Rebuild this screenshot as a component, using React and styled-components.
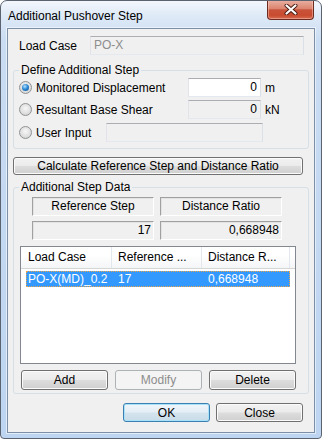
import React from 'react'
import styled, { createGlobalStyle } from 'styled-components'

const GlobalStyle = createGlobalStyle`
  html, body { margin: 0; padding: 0; background: #ffffff; }
  body {
    font-family: "Liberation Sans", Arial, sans-serif;
    font-size: 12px;
    color: #000;
  }
  * { box-sizing: border-box; }
`

const Window = styled.div`
  width: 322px;
  height: 439px;
  border: 1px solid #5b6370;
  border-radius: 7px 7px 4px 4px;
  background: linear-gradient(180deg, #f3f7fc 0px, #dfeaf7 14px, #c9dcf2 40px, #bdd5f1 100%);
  padding: 0 6px 5px;
  display: flex;
  flex-direction: column;
  overflow: hidden;
`

const TitleBar = styled.div`
  height: 27px;
  display: flex;
  align-items: center;
  padding-left: 1px;
`

const TitleText = styled.div`
  font-size: 12px;
  padding-top: 2px;
  color: #000;
`

const CloseButton = styled.div`
  margin-left: auto;
  margin-right: 1px;
  align-self: flex-start;
  margin-top: -1px;
  width: 47px;
  height: 20px;
  border: 1px solid #6d2b1f;
  border-top: none;
  border-radius: 0 0 4px 4px;
  background: linear-gradient(180deg, #eab2a5 0%, #dc8570 45%, #c8533a 52%, #c94b2f 80%, #d66a50 100%);
  box-shadow: inset 0 0 0 1px rgba(255, 210, 200, 0.45);
  display: flex;
  align-items: center;
  justify-content: center;
`

const Client = styled.div`
  flex: 1;
  background: #f0f0f0;
  border: 1px solid #7b8fa6;
  box-shadow: 0 0 0 1px rgba(255, 255, 255, 0.55);
  display: flex;
  flex-direction: column;
`

const LoadCaseRow = styled.div`
  margin-top: 7px;
  height: 19px;
  display: flex;
  align-items: center;
  padding-left: 11px;
`

const Label = styled.div`
  width: ${p => p.$w || 71}px;
  white-space: nowrap;
`

const Field = styled.div`
  width: ${p => p.$w}px;
  height: 19px;
  border: 1px solid;
  border-color: #abadb3 #dbdfe6 #e3e9ef #e2e3ea;
  background: ${p => (p.$disabled ? '#f0f0f0' : '#ffffff')};
  color: ${p => (p.$disabled && p.$grey ? '#8d8d8d' : '#000')};
  text-align: ${p => p.$align || 'left'};
  padding: 0 3px;
  line-height: 17px;
  white-space: nowrap;
  overflow: hidden;
`

const Group = styled.div`
  margin: ${p => p.$top}px 5px 0;
  border: 1px solid #d5dfe5;
  border-radius: 3px;
  display: flex;
  flex-direction: column;
  padding-bottom: ${p => p.$bottom}px;
`

const GroupTitle = styled.div`
  align-self: flex-start;
  margin: -8px 0 0 5px;
  padding: 0 2px;
  line-height: 14px;
  background: #f0f0f0;
`

const RadioRow = styled.div`
  margin-top: ${p => p.$top}px;
  height: 19px;
  display: flex;
  align-items: center;
  padding-left: 5px;
`

const RadioOption = styled.label`
  width: ${p => p.$w}px;
  display: flex;
  align-items: center;
  gap: 4px;
  white-space: nowrap;
`

const RadioCircle = styled.span`
  width: 13px;
  height: 13px;
  border-radius: 50%;
  border: 1px solid #8f9294;
  background: radial-gradient(circle at 50% 40%, #f7f7f7 0%, #dedede 60%, #c9c9c9 100%);
  display: flex;
  align-items: center;
  justify-content: center;
  flex-shrink: 0;

  &::after {
    content: '';
    display: ${p => (p.$checked ? 'block' : 'none')};
    width: 7px;
    height: 7px;
    border-radius: 50%;
    background: radial-gradient(circle at 40% 35%, #b6e4ff 0%, #2f8ad6 45%, #0d4a8f 100%);
  }
`

const Unit = styled.span`
  margin-left: 4px;
`

const Button = styled.button`
  width: ${p => p.$w || 87}px;
  height: ${p => p.$h || 20}px;
  padding: 0;
  font-family: inherit;
  font-size: 12px;
  color: #000;
  border: 1px solid #707070;
  border-radius: 3px;
  background: linear-gradient(180deg, #f2f2f2 0%, #ebebeb 48%, #dddddd 52%, #cfcfcf 100%);
  box-shadow: inset 0 0 0 1px #fbfbfb;

  &:disabled {
    color: #8d8d8d;
    border-color: #adb2b5;
    background: #f4f4f4;
    box-shadow: none;
  }
`

const DefaultButton = styled(Button)`
  border-color: #3c7fb1;
  background: linear-gradient(180deg, #f0f6fa 0%, #e4eef5 48%, #d4e4ee 52%, #c8dce8 100%);
  box-shadow: inset 0 0 0 1px #a8e2f8;
`

const CalcButton = styled(Button)`
  margin: 8px 0 0 5px;
  align-self: flex-start;
`

const StepGrid = styled.div`
  margin-top: 3px;
  padding-left: 18px;
  display: grid;
  grid-template-columns: 122px 122px;
  column-gap: 6px;
  row-gap: 5px;
`

const Static = styled.div`
  height: 19px;
  border: 1px solid;
  border-color: #a0a0a0 #ffffff #ffffff #a0a0a0;
  box-shadow: 1px 1px 0 #e3e3e3 inset;
  text-align: ${p => p.$align || 'center'};
  padding: 0 2px;
  line-height: 17px;
`

const ListView = styled.div`
  margin: 6px 0 0 6px;
  width: 276px;
  height: 118px;
  border: 1px solid #828790;
  background: #ffffff;
  display: flex;
  flex-direction: column;
`

const ListHeader = styled.div`
  height: 22px;
  display: grid;
  grid-template-columns: 91px 90px 88px 1fr;
  border-bottom: 1px solid #d5d5d5;
  background: linear-gradient(180deg, #ffffff 0%, #ffffff 40%, #f4f5f7 100%);
`

const HeaderCell = styled.div`
  border-right: 1px solid ${p => (p.$last ? 'transparent' : '#e3e8ee')};
  padding-left: ${p => p.$pad || 6}px;
  line-height: 21px;
  white-space: nowrap;
  overflow: hidden;
`

const ListRow = styled.div`
  margin: 2px 0 0 5px;
  width: 264px;
  height: 16px;
  display: grid;
  grid-template-columns: 86px 90px 88px;
  background: ${p => (p.$selected ? '#3399ff' : 'transparent')};
  color: ${p => (p.$selected ? '#ffffff' : '#000')};
  outline: ${p => (p.$selected ? '1px dotted #e9a24a' : 'none')};
  outline-offset: -1px;
`

const RowCell = styled.div`
  padding-left: ${p => p.$pad || 6}px;
  line-height: 16px;
  white-space: nowrap;
  overflow: hidden;
`

const ButtonRow = styled.div`
  margin-top: 6px;
  padding-left: 7px;
  display: flex;
  gap: ${p => p.$gap || 7}px;
`

const Footer = styled.div`
  margin-top: 9px;
  padding-right: 11px;
  display: flex;
  justify-content: flex-end;
  gap: 6px;
`

const CloseGlyph = () => (
  <svg width="14" height="11" viewBox="0 0 14 11">
    <path d="M2.5 1.5 L11.5 9.5 M11.5 1.5 L2.5 9.5" stroke="#4a1a10" strokeWidth="4" strokeLinecap="round" />
    <path d="M2.5 1.5 L11.5 9.5 M11.5 1.5 L2.5 9.5" stroke="#ffffff" strokeWidth="2.2" strokeLinecap="round" />
  </svg>
)

export default function App() {
  const rows = [{ name: 'PO-X(MD)_0.2', step: '17', ratio: '0,668948' }]

  return (
    <>
      <GlobalStyle />
      <Window>
        <TitleBar>
          <TitleText>Additional Pushover Step</TitleText>
          <CloseButton><CloseGlyph /></CloseButton>
        </TitleBar>
        <Client>
          <LoadCaseRow>
            <Label>Load Case</Label>
            <Field $w={214} $disabled $grey>PO-X</Field>
          </LoadCaseRow>

          <Group $top={15} $bottom={6}>
            <GroupTitle>Define Additional Step</GroupTitle>
            <RadioRow $top={1}>
              <RadioOption $w={169}><RadioCircle $checked />Monitored Displacement</RadioOption>
              <Field $w={73} $align="right">0</Field>
              <Unit>m</Unit>
            </RadioRow>
            <RadioRow $top={3}>
              <RadioOption $w={169}><RadioCircle />Resultant Base Shear</RadioOption>
              <Field $w={73} $align="right" $disabled>0</Field>
              <Unit>kN</Unit>
            </RadioRow>
            <RadioRow $top={4}>
              <RadioOption $w={87}><RadioCircle />User Input</RadioOption>
              <Field $w={157} $disabled />
            </RadioRow>
          </Group>

          <CalcButton $w={290} $h={18}>Calculate Reference Step and Distance Ratio</CalcButton>

          <Group $top={12} $bottom={3}>
            <GroupTitle>Additional Step Data</GroupTitle>
            <StepGrid>
              <Static>Reference Step</Static>
              <Static>Distance Ratio</Static>
              <Static $align="right">17</Static>
              <Static $align="right">0,668948</Static>
            </StepGrid>

            <ListView>
              <ListHeader>
                <HeaderCell $pad={7}>Load Case</HeaderCell>
                <HeaderCell>Reference ...</HeaderCell>
                <HeaderCell>Distance R...</HeaderCell>
                <HeaderCell $last />
              </ListHeader>
              {rows.map(r => (
                <ListRow key={r.name} $selected>
                  <RowCell $pad={2}>{r.name}</RowCell>
                  <RowCell>{r.step}</RowCell>
                  <RowCell>{r.ratio}</RowCell>
                </ListRow>
              ))}
            </ListView>

            <ButtonRow>
              <Button>Add</Button>
              <Button disabled>Modify</Button>
              <Button>Delete</Button>
            </ButtonRow>
          </Group>

          <Footer>
            <DefaultButton $h={19}>OK</DefaultButton>
            <Button $h={19}>Close</Button>
          </Footer>
        </Client>
      </Window>
    </>
  )
}
